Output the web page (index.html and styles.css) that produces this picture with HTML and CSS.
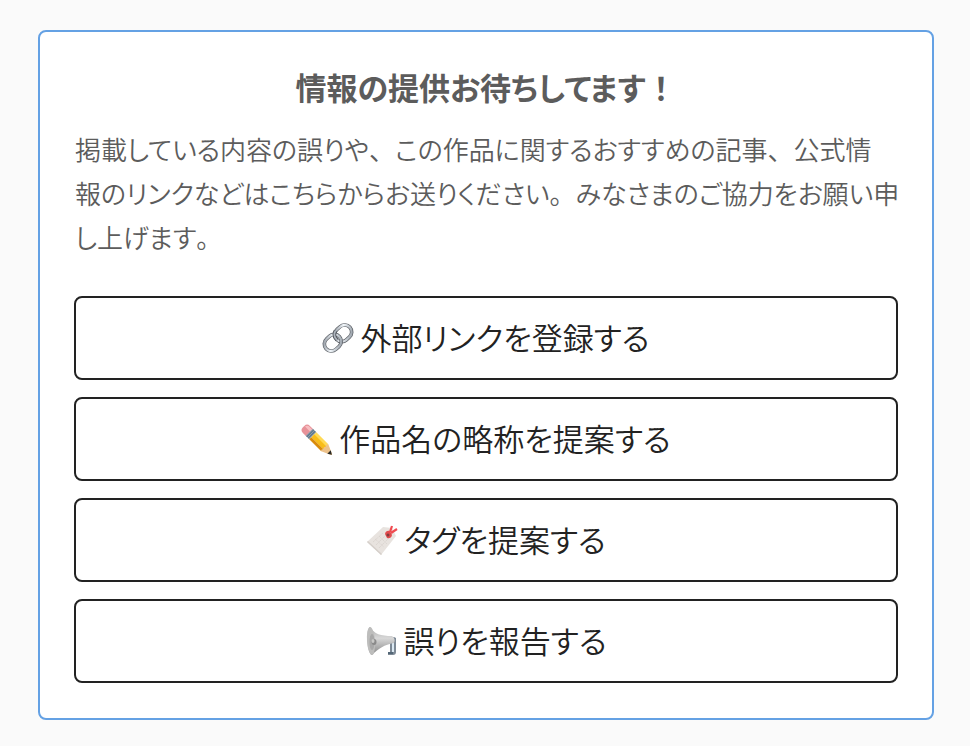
FILE: index.html
```html
<!DOCTYPE html>
<html lang="ja">
<head>
    <meta charset="UTF-8">
    <meta name="viewport" content="width=device-width, initial-scale=1.0">
    <title>情報提供</title>
    <link rel="stylesheet" href="styles.css">
</head>
<body>
    <section class="request-card">
        <h2 class="request-title">情報の提供お待ちしてます<span class="full">！</span></h2>
        <p class="request-text">掲載している内容の誤りや<span class="full">、</span>この作品に関するおすすめの記事<span class="full">、</span>公式情<br>報のリンクなどはこちらからお送りください<span class="full">。</span>みなさまのご協力をお願い申<br>し上げます<span class="full">。</span></p>

        <div class="request-buttons">
            <button type="button" class="request-button">
                <svg class="icon" viewBox="0 0 32 32" aria-hidden="true">
                    <defs>
                        <linearGradient id="steel" x1="0" y1="0" x2="1" y2="1">
                            <stop offset="0" stop-color="#858c95"/>
                            <stop offset="0.45" stop-color="#f1f6fa"/>
                            <stop offset="1" stop-color="#8b939c"/>
                        </linearGradient>
                    </defs>
                    <g fill="none" transform="rotate(-42 16 16)">
                        <rect x="14" y="9" width="18" height="14" rx="7" stroke="#55595f" stroke-width="3.6"/>
                        <rect x="14" y="9" width="18" height="14" rx="7" stroke="url(#steel)" stroke-width="2.3"/>
                        <rect x="0" y="9" width="18" height="14" rx="7" stroke="#595d63" stroke-width="3.6"/>
                        <rect x="0" y="9" width="18" height="14" rx="7" stroke="url(#steel)" stroke-width="2.3"/>
                        <path d="M14 17v-1a7 7 0 0 1 5-7" stroke="#51545b" stroke-width="3.6"/>
                        <path d="M14 17v-1a7 7 0 0 1 5-7" stroke="#aeb5bd" stroke-width="1.8"/>
                    </g>
                </svg>
                <span class="label">外部リンクを登録する</span>
            </button>
            <button type="button" class="request-button">
                <svg class="icon" viewBox="0 0 32 32" aria-hidden="true">
                    <g transform="translate(4 5) rotate(45)">
                        <path d="M2-5h5v10H2a4 4 0 0 1-4-4v-2a4 4 0 0 1 4-4z" fill="#e79299"/>
                        <path d="M1-4h6v3h-8q0-2 2-3z" fill="#f8bdc0"/>
                        <path d="M6-5h5V5H6z" fill="#8da0ae"/>
                        <path d="M7-5h1V5H7zM9-5h1V5H9z" fill="#536d83"/>
                        <path d="M11-5h17v3.500H11z" fill="#ffda57"/>
                        <path d="M11-2h18v4H11z" fill="#f8bd19"/>
                        <path d="M11 2h17v3H11z" fill="#d98b0b"/>
                        <path d="M28-5l9 4q2 1 0 2l-9 4q-2-1 0-3-2-2 0-4-2-1 0-3z" fill="#edc28b"/>
                        <path d="M34-2.400L38 0l-4 2.400z" fill="#292a27"/>
                    </g>
                </svg>
                <span class="label">作品名の略称を提案する</span>
            </button>
            <button type="button" class="request-button">
                <svg class="icon" viewBox="0 0 32 32" aria-hidden="true">
                    <path d="M1 18L17 3l9 1 4 8-15 19z" fill="#e8e3df"/>
                    <path d="M1 18l14 13 1-1L2 17z" fill="#d5cfca"/>
                    <path d="M7 18l10-9M10 21l10-10M13 24l10-10M9 15l9 8M13 12l8 8" stroke="#d8d2cd" stroke-width="1" stroke-dasharray="1 1"/>
                    <path d="M19 10q1-4 5-3l2 4q-1 4-5 3z" fill="#e14c4e"/>
                    <circle cx="22" cy="11" r="1.500" fill="#813b3d"/>
                    <path d="M24 8l2-6M25 9l6-4" stroke="#f04b50" stroke-width="2.200" fill="none"/>
                </svg>
                <span class="label">タグを提案する</span>
            </button>
            <button type="button" class="request-button">
                <svg class="icon" viewBox="0 0 32 32" aria-hidden="true">
                    <defs>
                        <linearGradient id="horn" x1="0" y1="0" x2="0" y2="1">
                            <stop offset="0" stop-color="#aaa"/>
                            <stop offset="0.4" stop-color="#d8d8d8"/>
                            <stop offset="1" stop-color="#858585"/>
                        </linearGradient>
                    </defs>
                    <path d="M21 14l8-2 2 1v14q0 3-3 3h-5v-3h2V17l-4 2z" fill="#7d8995"/>
                    <path d="M27 15h2v12h-2z" fill="#dbe9f3"/>
                    <path d="M23 27h5v2h-5z" fill="#536777"/>
                    <path d="M5 2c4 7 11 9 22 9q4 3 2 7c-10 2-15 5-22 12C2 28 0 5 5 2z" fill="url(#horn)"/>
                    <ellipse cx="6" cy="16" rx="4" ry="14" transform="rotate(-4 6 16)" fill="#bdbdbc"/>
                    <ellipse cx="7" cy="17" rx="2.500" ry="8" fill="#a8a8a8"/>
                    <ellipse cx="9" cy="17" rx="2.500" ry="3" fill="#8a8a8a"/>
                    <ellipse cx="8" cy="16" rx="1.500" ry="2" fill="#c9c9c7"/>
                </svg>
                <span class="label">誤りを報告する</span>
            </button>
        </div>
    </section>
</body>
</html>
```
FILE: styles.css
```css
* {
    box-sizing: border-box;
}
body {
    margin: 0;
    padding: 30px 36px 26px 38px;
    background-color: #fafafa;
    color: #5c5c5c;
    font-family: "Noto Sans CJK JP", sans-serif;
    font-feature-settings: "palt";
}
.request-card {
    padding: 35px 34px;
    background-color: #fff;
    border: 2px solid #64a1e4;
    border-radius: 8px;
}
.request-title {
    margin: 0 0 20px;
    font-size: 31px;
    line-height: 40px;
    font-weight: bold;
    text-align: center;
}
.request-text {
    margin: 0 -8px 37px 0;
    padding-left: 1px;
    font-size: 26px;
    line-height: 44px;
    font-weight: 350;
}
/* punctuation keeps its full width */
.full {
    font-feature-settings: normal;
}
.request-buttons {
    display: grid;
    gap: 17px;
}
.request-button {
    display: flex;
    align-items: center;
    justify-content: center;
    gap: 6px;
    height: 84px;
    padding: 0;
    background-color: #fff;
    border: 2px solid #222;
    border-radius: 8px;
    color: #222;
    font-family: inherit;
    font-feature-settings: inherit;
    font-size: 31px;
    font-weight: 350;
    cursor: pointer;
}
.request-button:hover {
    background-color: #f5f5f5;
}
.icon {
    width: 32px;
    height: 32px;
}
.label {
    padding-bottom: 4px;
}
```
